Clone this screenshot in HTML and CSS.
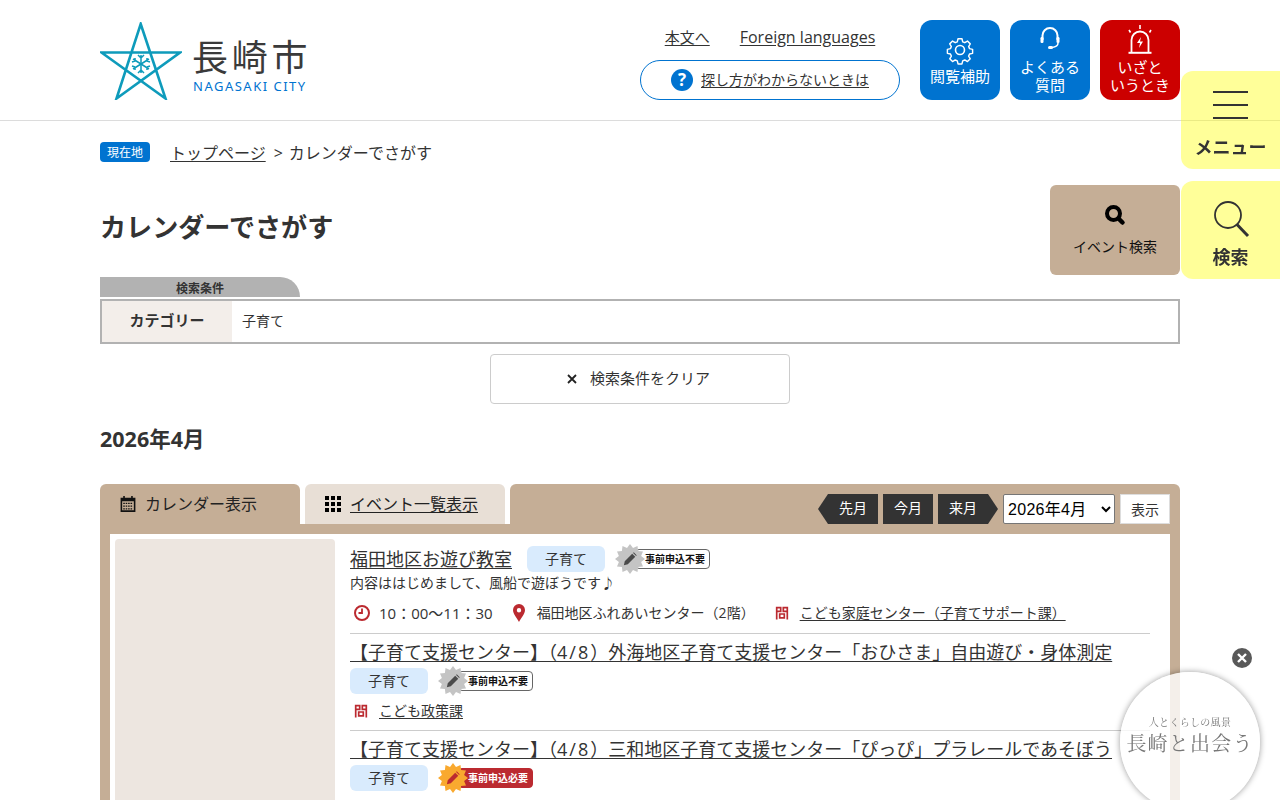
FILE: index.html
```html
<!DOCTYPE html>
<html lang="ja">
<head>
<meta charset="utf-8">
<title>カレンダーでさがす | 長崎市</title>
<link rel="stylesheet" href="styles.css">
</head>
<body>
<svg class="defs" width="0" height="0" aria-hidden="true">
  <symbol id="burst" viewBox="0 0 30 30"><polygon points="30,15 26.1,18 28,22.5 23.1,23.1 22.5,28 18,26.1 15,30 12,26.1 7.5,28 6.9,23.1 2,22.5 3.9,18 0,15 3.9,12 2,7.5 6.9,6.9 7.5,2 12,3.9 15,0 18,3.9 22.5,2 23.1,6.9 28,7.5 26.1,12"/></symbol>
  <symbol id="pencil" viewBox="0 0 16 16"><path d="M1 15l1-4.500L10.500 2l3.500 3.500L5.500 14z M11.500 1l.8-.6 3.300 3.300-.6.800z"/></symbol>
  <symbol id="toi" viewBox="0 0 14 14"><path d="M1.700 13.500V1.700h4v3.600h-4M12.300 13.500V1.700h-4v3.600h4M4.700 8h4.600v3.800H4.700z"/></symbol>
</svg>
<header class="site-header">
  <div class="header-inner">
    <a class="logo">
      <svg class="logo-star" viewBox="0 0 82 78" width="82" height="78">
        <path d="M40.700 2 L65.500 76.500 L1.500 30.500 L80 30.500 L16.500 76.500 Z" fill="none" stroke="#0e9bbb" stroke-width="2.600" stroke-linejoin="miter"/>
        <g stroke="#0e9bbb" stroke-width="1.500" fill="none">
          <path d="M41 33v9M41 36l-3-3M41 36l3-3M41 42v9M41 48l-3 3M41 48l3 3"/>
          <path d="M33 37l16 10M35 39l-3 1M35 39l0-3M47 45l3-1M47 45l0 3"/>
          <path d="M49 37l-16 10M47 39l3 1M47 39l0-3M35 45l-3-1M35 45l0 3"/>
        </g>
      </svg>
      <span class="logo-text">
        <span class="logo-ja">長崎市</span>
        <span class="logo-en">NAGASAKI CITY</span>
      </span>
    </a>
    <div class="header-links">
      <div class="link-row">
        <a class="ul link-main">本文へ</a>
        <a class="ul">Foreign languages</a>
      </div>
      <a class="help-pill"><span class="help-q">?</span><span class="ul help-text">探し方がわからないときは</span></a>
    </div>
    <nav class="quick">
      <a class="quick-btn">
        <svg width="30" height="30" viewBox="0 0 30 30" fill="none" stroke="#fff" stroke-width="1.600"><circle cx="15" cy="15" r="4.500"/><path d="M12.800 2.500h4.400l.8 3.400 2.300 1 3-1.800 3.100 3.100-1.800 3 1 2.300 3.400.8v4.400l-3.400.8-1 2.300 1.800 3-3.100 3.100-3-1.800-2.300 1-.8 3.400h-4.400l-.8-3.400-2.300-1-3 1.800-3.100-3.100 1.800-3-1-2.300-3.400-.8v-4.400l3.400-.8 1-2.300-1.800-3 3.100-3.100 3 1.800 2.300-1z" stroke-linejoin="round" transform="translate(1.500 1.500) scale(.9)"/></svg>
        <span>閲覧補助</span>
      </a>
      <a class="quick-btn quick-top">
        <svg width="24" height="26" viewBox="0 0 24 26" fill="none" stroke="#fff" stroke-width="2"><path d="M4.500 14V9.500a7.500 7.500 0 0 1 15 0V14"/><rect x="2.500" y="11" width="3" height="6" rx="1.200" fill="#fff" stroke="none"/><rect x="18.500" y="11" width="3" height="6" rx="1.200" fill="#fff" stroke="none"/><path d="M20 17c0 3-2 4-6 4.500" stroke-width="1.500"/><rect x="10" y="20" width="5" height="3" rx="1.500" fill="#fff" stroke="none"/></svg>
        <span>よくある<br>質問</span>
      </a>
      <a class="quick-btn quick-top quick-red">
        <svg width="26" height="30" viewBox="0 0 26 30" fill="none" stroke="#fff" stroke-width="1.800"><path d="M4.500 28V16a8.500 8.500 0 0 1 17 0V28"/><path d="M1.500 28.800h23" stroke-width="2"/><path d="M13 1v4M2 6l1.500 2.500M24 6l-1.500 2.500" stroke-width="1.600"/><path d="M14 13l-4 6h3l-1 5 4-6.500h-3z" fill="#fff" stroke="none"/></svg>
        <span>いざと<br>いうとき</span>
      </a>
    </nav>
  </div>
</header>

<main class="page">
  <div class="crumbs">
    <span class="here">現在地</span>
    <span class="crumb-text"><a class="ul">トップページ</a><span class="crumb-sep">&gt;</span>カレンダーでさがす</span>
  </div>
  <div class="title-row">
    <h1>カレンダーでさがす</h1>
    <a class="event-search">
      <svg width="24" height="24" viewBox="0 0 24 24" fill="none" stroke="#000"><circle cx="10.500" cy="10.500" r="6.500" stroke-width="4"/><path d="M16 16l3.500 3.500" stroke-width="4.500" stroke-linecap="round"/></svg>
      <span>イベント検索</span>
    </a>
  </div>

  <div class="cond-tab">検索条件</div>
  <div class="cond-box">
    <div class="cond-th">カテゴリー</div>
    <div class="cond-td">子育て</div>
  </div>
  <a class="clear-btn">
    <svg width="10" height="10" viewBox="0 0 10 10" stroke="#222" stroke-width="1.800"><path d="M1 1l8 8M9 1l-8 8"/></svg>
    <span class="clear-text">検索条件をクリア</span>
  </a>
  <h2>2026年4月</h2>

  <section class="cal">
    <div class="cal-head">
      <div class="tab tab-on">
        <svg width="18" height="18" viewBox="0 0 16 17"><path fill="#111" fill-rule="evenodd" d="M1 2.500h2.500V1h1.500v1.500h6V1h1.500v1.500H15V16H1z M2.500 6v8.500h11V6z"/><path stroke="#111" stroke-width="1.200" stroke-dasharray="1.500 .8" d="M3.500 8h9M3.500 10.500h9M3.500 13h9"/></svg>
        <span class="tab-text">カレンダー表示</span>
      </div>
      <a class="tab tab-off">
        <svg width="16" height="16" viewBox="0 0 16 16" fill="#000"><path d="M0 0h4v4H0zM6 0h4v4H6zM12 0h4v4h-4zM0 6h4v4H0zM6 6h4v4H6zM12 6h4v4h-4zM0 12h4v4H0zM6 12h4v4H6zM12 12h4v4h-4z"/></svg>
        <span class="ul tab-text">イベント一覧表示</span>
      </a>
      <div class="cal-controls">
        <a class="pager pager-prev">先月</a>
        <a class="pager">今月</a>
        <a class="pager pager-next">来月</a>
        <select class="month-sel"><option>2026年4月</option></select>
        <button class="show-btn">表示</button>
      </div>
    </div>
    <div class="cal-body">
      <div class="cal-inner">
        <aside class="photo"></aside>
        <div class="events">
          <article class="event event-one">
            <div class="ev-line">
              <a class="ev-title ul">福田地区お遊び教室</a>
              <span class="tag">子育て</span>
              <span class="badge"><span class="burst"><svg width="30" height="30" class="gray"><use href="#burst"/></svg><svg width="14" height="14" class="pen"><use href="#pencil"/></svg></span><span class="badge-label">事前申込不要</span></span>
            </div>
            <p class="ev-desc">内容ははじめまして、風船で遊ぼうです♪</p>
            <div class="ev-info">
              <span class="info-item">
                <svg width="18" height="18" viewBox="0 0 18 18" fill="none" stroke="#bb2a30"><circle cx="9" cy="9" r="7" stroke-width="2"/><path d="M9 4.500V9H5.500" stroke-width="1.800"/></svg>
                <span class="info-time">10：00～11：30</span>
              </span>
              <span class="info-item info-place">
                <svg width="14" height="18" viewBox="0 0 14 18"><path fill="#bb2a30" fill-rule="evenodd" d="M7 0a6 6 0 0 1 6 6c0 4-4 8-6 12C5 14 1 10 1 6a6 6 0 0 1 6-6z M7 4a2.200 2.200 0 1 0 0 4.400A2.200 2.200 0 0 0 7 4z"/></svg>
                <span>福田地区ふれあいセンター（2階）</span>
              </span>
              <span class="info-item info-toi">
                <svg class="toi" width="14" height="14"><use href="#toi"/></svg>
                <a class="ul">こども家庭センター（子育てサポート課）</a>
              </span>
            </div>
          </article>
          <article class="event">
            <a class="ev-title ul">【子育て支援センター】（<span class="num">4/8</span>）外海地区子育て支援センター「おひさま」自由遊び・身体測定</a>
            <div class="ev-line ev-tags">
              <span class="tag">子育て</span>
              <span class="badge"><span class="burst"><svg width="30" height="30" class="gray"><use href="#burst"/></svg><svg width="14" height="14" class="pen"><use href="#pencil"/></svg></span><span class="badge-label">事前申込不要</span></span>
            </div>
            <div class="ev-info">
              <span class="info-item info-toi">
                <svg class="toi" width="14" height="14"><use href="#toi"/></svg>
                <a class="ul">こども政策課</a>
              </span>
            </div>
          </article>
          <article class="event event-last">
            <a class="ev-title ul">【子育て支援センター】（<span class="num">4/8</span>）三和地区子育て支援センター「ぴっぴ」プラレールであそぼう</a>
            <div class="ev-line ev-tags">
              <span class="tag">子育て</span>
              <span class="badge"><span class="burst"><svg width="30" height="30" class="orange"><use href="#burst"/></svg><svg width="14" height="14" class="pen pen-red"><use href="#pencil"/></svg></span><span class="badge-label badge-red">事前申込必要</span></span>
            </div>
          </article>
        </div>
      </div>
    </div>
  </section>
</main>

<a class="side-btn side-menu">
  <span class="bars"><i></i><i></i><i></i></span>
  <span>メニュー</span>
</a>
<a class="side-btn side-search">
  <svg width="38" height="38" viewBox="0 0 38 38" fill="none" stroke="#333"><circle cx="16" cy="14" r="13" stroke-width="1.800"/><path d="M25 23.500L36 35" stroke-width="3"/></svg>
  <span>検索</span>
</a>
<div class="promo">
  <span class="promo-sub">人とくらしの風景</span>
  <span class="promo-main">長崎と出会う</span>
</div>
<span class="promo-close">
  <svg width="10" height="10" viewBox="0 0 10 10" stroke="#fff" stroke-width="2.400"><path d="M1 1l8 8M9 1l-8 8"/></svg>
</span>
</body>
</html>
```

FILE: styles.css
```css
* { box-sizing: border-box; }
html, body { margin: 0; padding: 0; height: 800px; overflow: hidden; }
body {
  font-family: "Open Sans", "Noto Sans CJK JP", sans-serif;
  color: #333;
  background: #fff;
  font-size: 14px;
}
.defs { position: absolute; }
a { color: inherit; text-decoration: none; }
.ul { text-decoration: underline; text-underline-offset: 2px; }
h1, h2, p { margin: 0; }

.site-header { height: 121px; border-bottom: 1px solid #dcdcdc; }
.header-inner { width: 1080px; margin: 0 auto; height: 120px; display: flex; align-items: flex-start; }
.logo { display: flex; align-items: flex-start; padding-top: 22px; width: 540px; }
.logo-star { display: block; flex: none; }
.logo-text { display: flex; flex-direction: column; margin-left: 11px; padding-top: 11px; }
.logo-ja { font-size: 36px; line-height: 44px; letter-spacing: 3.800px; margin-left: -1px; color: #3a3a3a; white-space: nowrap; font-family: "Noto Sans CJK JP", sans-serif; }
.logo-en { font-size: 13px; line-height: 18px; letter-spacing: 1.500px; color: #0073d0; white-space: nowrap; font-family: "Noto Sans", sans-serif; }
.header-links { width: 260px; display: flex; flex-direction: column; align-items: center; padding-top: 26px; }
.link-row { display: flex; gap: 30px; font-size: 16px; line-height: 22px; height: 34px; }
.link-main { font-size: 15px; }
.help-pill { width: 260px; height: 40px; border: 1px solid #0073d0; border-radius: 20px; display: flex; align-items: center; justify-content: center; gap: 8px; font-size: 14px; }
.help-text { margin-bottom: 3px; }
.help-q { width: 22px; height: 22px; border-radius: 50%; background: #0073d0; color: #fff; font-weight: 700; font-size: 17px; line-height: 22px; text-align: center; }
.quick { margin-left: 20px; padding-top: 20px; display: flex; gap: 10px; }
.quick-btn { width: 80px; height: 80px; border-radius: 12px; background: #0073d0; color: #fff; display: flex; flex-direction: column; align-items: center; justify-content: center; font-size: 15px; line-height: 18px; text-align: center; gap: 2px; }
.quick-top { justify-content: flex-start; padding-top: 6px; gap: 6px; }
.quick-red { background: #cc0000; padding-top: 4px; gap: 4px; }

.page { width: 1080px; margin: 0 auto; }
.crumbs { display: flex; align-items: center; gap: 20px; padding-top: 21px; height: 41px; }
.here { width: 50px; height: 20px; border-radius: 4px; background: #0073d0; color: #fff; font-size: 12px; line-height: 21px; text-align: center; }
.crumb-text { font-size: 16px; line-height: 20px; padding-top: 2px; }
.crumb-sep { padding: 0 6px 0 8px; }
.title-row { display: flex; justify-content: space-between; margin-top: 23px; height: 90px; }
h1 { font-size: 26.100px; line-height: 38px; font-weight: 700; padding-top: 23px; }
.event-search { width: 130px; height: 90px; background: #c5ae96; border-radius: 6px; display: flex; flex-direction: column; align-items: center; padding-top: 18px; gap: 10px; color: #111; font-size: 14px; line-height: 20px; }

.cond-tab { width: 200px; height: 20px; margin-top: 2px; background: #b2b2b2; border-top-right-radius: 20px; font-size: 12px; font-weight: 700; line-height: 23px; text-align: center; }
.cond-box { margin-top: 2px; height: 45px; border: 2px solid #b2b2b2; display: flex; }
.cond-th { width: 130px; background: #f3eeea; font-weight: 700; text-align: center; line-height: 39px; font-size: 15px; }
.cond-td { padding-left: 10px; line-height: 40px; font-size: 14px; }
.clear-btn { width: 300px; height: 50px; margin: 10px auto 0; border: 1px solid #ccc; border-radius: 4px; display: flex; align-items: center; justify-content: center; gap: 13px; font-size: 15px; padding-right: 3px; }
.clear-text { margin-bottom: 3px; }
h2 { font-size: 21.500px; line-height: 30px; font-weight: 700; margin-top: 20px; }

.cal { margin-top: 30px; }
.cal-head { display: flex; gap: 5px; height: 40px; }
.tab { width: 200px; height: 40px; display: flex; align-items: center; gap: 8px; padding-left: 19px; font-size: 16px; border-radius: 6px 6px 0 0; color: #222; }
.tab-off { gap: 9px; padding-left: 20px; }
.tab-text { margin-bottom: 2px; }
.tab-on { background: #c5ae96; }
.tab-off { background: #e8dfd6; }
.cal-controls { flex: 1; background: #c5ae96; border-radius: 6px 6px 0 0; display: flex; align-items: center; justify-content: flex-end; padding: 10px 10px 0 0; gap: 5px; }
.pager { width: 50px; height: 30px; background: #333; color: #fff; font-size: 14px; line-height: 28px; text-align: center; position: relative; }
.pager-prev::before, .pager-next::after { content: ""; position: absolute; top: 0; width: 0; height: 0; border-top: 15px solid transparent; border-bottom: 15px solid transparent; }
.pager-prev { margin-left: 10px; }
.pager-prev::before { left: -10px; border-right: 10px solid #333; }
.pager-next { margin-right: 10px; }
.pager-next::after { right: -10px; border-left: 10px solid #333; }
.month-sel { width: 112px; height: 30px; font-size: 16px; letter-spacing: .3px; font-family: "Liberation Sans", "Noto Sans CJK JP", sans-serif; background: #fff; color: #000; border: 1px solid #767676; border-radius: 2px; }
.show-btn { width: 50px; height: 30px; background: #fff; border: 1px solid #ddd; color: #333; font-family: inherit; font-size: 14px; padding: 0; }
.cal-body { background: #c5ae96; padding: 10px 10px 0; }
.cal-inner { background: #fff; display: flex; padding: 5px 20px 0 5px; gap: 15px; }
.photo { width: 220px; flex: none; background: #ede6e0; border-radius: 4px; }
.events { flex: 1; padding-top: 5px; }
.event { border-bottom: 1px solid #ccc; padding-bottom: 9px; margin-bottom: 3px; }
.event-one { padding-bottom: 10px; }
.event-last { border-bottom: 0; padding-bottom: 60px; }
.ev-line { display: flex; align-items: center; gap: 10px; height: 30px; }
.ev-tags { margin-top: -1px; height: 30px; }
.ev-title { font-size: 18px; line-height: 30px; display: block; white-space: nowrap; }
.ev-line .ev-title { margin-right: 5px; }
.num { letter-spacing: 2px; }
.tag { width: 78px; height: 26px; background: #d9ebfd; border-radius: 6px; font-size: 14px; line-height: 26px; text-align: center; flex: none; }
.badge { display: flex; align-items: center; position: relative; width: 95px; height: 30px; }
.burst { position: absolute; left: 0; top: 0; width: 30px; height: 30px; z-index: 1; }
.burst > svg { position: absolute; left: 0; top: 0; }
.burst > .pen { left: 8px; top: 8px; }
.gray { fill: #c4c4c4; }
.orange { fill: #f9a92f; }
.pen { fill: #4a4a4a; }
.pen-red { fill: #bb2a30; }
.badge-label { position: absolute; left: 20px; top: 5px; width: 75px; height: 20px; border: 1px solid #666; border-radius: 4px; background: #fff; color: #111; font-size: 10px; font-weight: 700; line-height: 18px; padding-left: 9px; white-space: nowrap; }
.badge-red { background: #bb2a30; border-color: #bb2a30; color: #fff; }
.ev-desc { font-size: 14px; line-height: 20px; margin-top: -1px; }
.ev-info { display: flex; gap: 19px; padding-left: 3px; font-size: 14px; line-height: 20px; margin-top: 10px; align-items: center; }
.info-item { display: flex; align-items: center; gap: 8px; }
.info-time { font-size: 15px; }
.info-place { gap: 11px; }
.info-toi { gap: 11px; }
.toi { margin-left: 1px; fill: none; stroke: #bb2a30; stroke-width: 1.700; }
.event .ev-tags + .ev-info { margin-top: 5px; }

.side-btn { position: fixed; right: 0; width: 99px; height: 98px; background: rgba(255, 255, 0, .4); border-radius: 12px 0 0 12px; display: flex; flex-direction: column; align-items: center; font-weight: 700; font-size: 18px; line-height: 26px; color: #333; }
.side-menu { top: 71px; padding-top: 20px; }
.side-search { top: 181px; padding-top: 20px; }
.side-search span { margin-top: 5px; }
.bars { width: 35px; height: 28px; display: flex; flex-direction: column; justify-content: space-between; margin-bottom: 15px; }
.bars i { display: block; height: 2px; background: #333; }
.promo { position: fixed; left: 1120px; top: 672px; width: 140px; height: 140px; border-radius: 50%; background: rgba(255, 255, 255, .8); box-shadow: 0 0 6px rgba(0, 0, 0, .4); display: flex; flex-direction: column; align-items: center; padding-top: 42px; font-family: "Noto Serif CJK JP", "Liberation Serif", "Noto Sans CJK JP", serif; color: #777; }
.promo-sub { font-size: 10px; line-height: 16px; letter-spacing: .3px; }
.promo-main { font-size: 20px; line-height: 26px; letter-spacing: 1.200px; white-space: nowrap; }
.promo-close { position: fixed; left: 1232px; top: 648px; width: 20px; height: 20px; border-radius: 50%; background: #595959; display: flex; align-items: center; justify-content: center; }
```
